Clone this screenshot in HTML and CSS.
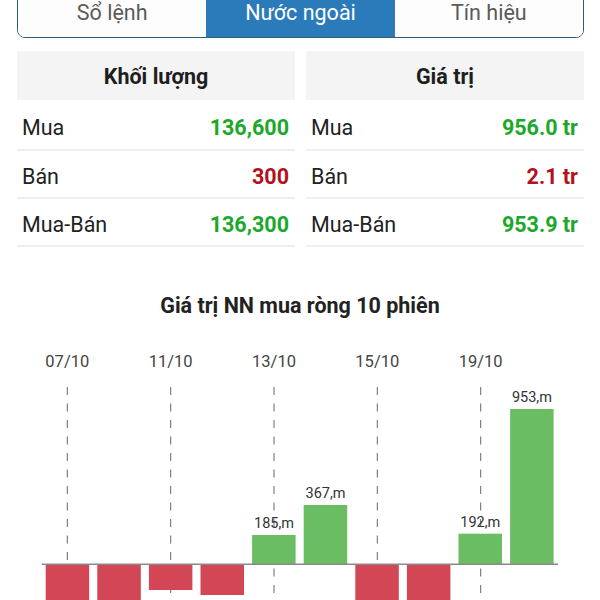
FILE: index.html
```html
<!DOCTYPE html>
<html lang="vi">
<head>
    <meta charset="UTF-8">
    <title>Nước ngoài</title>
    <link rel="stylesheet" href="styles.css">
</head>
<body>
    <div class="container">
        <div class="tabs">
            <div class="tab">Sổ lệnh</div>
            <div class="tab active">Nước ngoài</div>
            <div class="tab">Tín hiệu</div>
        </div>

        <div class="tables">
            <div class="stat-table">
                <div class="stat-head">Khối lượng</div>
                <div class="stat-row"><span>Mua</span><span class="up">136,600</span></div>
                <div class="stat-row"><span>Bán</span><span class="down">300</span></div>
                <div class="stat-row"><span>Mua-Bán</span><span class="up">136,300</span></div>
            </div>
            <div class="stat-table">
                <div class="stat-head">Giá trị</div>
                <div class="stat-row"><span>Mua</span><span class="up">956.0 tr</span></div>
                <div class="stat-row"><span>Bán</span><span class="down">2.1 tr</span></div>
                <div class="stat-row"><span>Mua-Bán</span><span class="up">953.9 tr</span></div>
            </div>
        </div>
    </div>

    <div class="chart">
        <h2 class="chart-title">Giá trị NN mua ròng 10 phiên</h2>
        <!-- net foreign buying, last 10 sessions -->
        <svg class="chart-svg" width="600" height="270" viewBox="0 0 600 270">
            <g class="dates">
                <text x="67.3" y="27">07/10</text>
                <text x="170.7" y="27">11/10</text>
                <text x="274" y="27">13/10</text>
                <text x="377.3" y="27">15/10</text>
                <text x="480.7" y="27">19/10</text>
            </g>
            <g class="grid">
                <line x1="67.3" y1="47" x2="67.3" y2="270"/>
                <line x1="170.7" y1="47" x2="170.7" y2="270"/>
                <line x1="274" y1="47" x2="274" y2="270"/>
                <line x1="377.3" y1="47" x2="377.3" y2="270"/>
                <line x1="480.7" y1="47" x2="480.7" y2="270"/>
            </g>
            <g class="bars">
                <rect class="neg" x="45.7" y="224.5" width="43.5" height="50"/>
                <rect class="neg" x="97.3" y="224.5" width="43.5" height="50"/>
                <rect class="neg" x="148.9" y="224.5" width="43.5" height="25.5"/>
                <rect class="neg" x="200.5" y="224.5" width="43.5" height="30.5"/>
                <rect class="pos" x="252.1" y="195" width="43.5" height="29.5"/>
                <rect class="pos" x="303.7" y="165" width="43.5" height="59.5"/>
                <rect class="neg" x="355.3" y="224.5" width="43.5" height="50"/>
                <rect class="neg" x="406.9" y="224.5" width="43.5" height="50"/>
                <rect class="pos" x="458.5" y="193.7" width="43.5" height="30.8"/>
                <rect class="pos" x="510.1" y="69" width="43.5" height="155.5"/>
            </g>
            <line class="axis" x1="41.7" y1="224.3" x2="558" y2="224.3"/>
            <g class="labels">
                <text x="274" y="188">185,m</text>
                <text x="325.5" y="158">367,m</text>
                <text x="480.3" y="187">192,m</text>
                <text x="531.9" y="62">953,m</text>
            </g>
        </svg>
    </div>
</body>
</html>
```

FILE: styles.css
```css
body {
    font-family: Roboto, "Noto Sans", Arial, sans-serif;
    background-color: #ffffff;
    color: #222;
    margin: 0;
    padding: 0;
    overflow: hidden;
}

.container {
    padding: 0 16px 0 17px;
}

.tabs {
    display: flex;
    height: 50px;
    margin-top: -12px;
    border: 1.5px solid #2f5d73;
    border-radius: 0 0 8px 8px;
    overflow: hidden;
    box-sizing: border-box;
}

.tab {
    flex: 1;
    display: flex;
    align-items: center;
    justify-content: center;
    padding-bottom: 2px;
    font-size: 21.5px;
    color: #5a5a5a;
    background-color: #fdfdfd;
}

.tab.active {
    background-color: #2b7bba;
    color: #ffffff;
}

.tables {
    display: grid;
    grid-template-columns: 1fr 1fr;
    gap: 11px;
    margin-top: 13px;
}

.stat-head {
    height: 49px;
    display: flex;
    align-items: center;
    justify-content: center;
    padding-top: 2px;
    box-sizing: border-box;
    background-color: #f4f4f4;
    font-size: 21.5px;
    font-weight: bold;
    color: #1e1e1e;
}

.stat-row {
    display: flex;
    justify-content: space-between;
    align-items: center;
    height: 48px;
    padding: 5px 6px 0 5px;
    box-sizing: border-box;
    border-bottom: 2px solid #efefef;
    font-size: 21.5px;
    color: #222;
}

.stat-row:nth-child(2) {
    height: 51px;
}

.stat-row .up {
    color: #1ba82b;
    font-weight: bold;
}

.stat-row .down {
    color: #b1121c;
    font-weight: bold;
}

.chart-title {
    margin: 46px 0 0;
    text-align: center;
    font-size: 21.5px;
    font-weight: bold;
    color: #222;
    line-height: 26px;
}

.chart-svg {
    display: block;
    margin-top: 21px;
}

.dates text {
    font-family: Roboto, Arial, sans-serif;
    font-size: 16.5px;
    fill: #444;
    text-anchor: middle;
}

.grid line {
    stroke: #666;
    stroke-width: 1;
    stroke-dasharray: 8 8.5;
}

.bars .pos {
    fill: #6abd62;
}

.bars .neg {
    fill: #d34656;
}

.axis {
    stroke: #8a8a8a;
    stroke-width: 1.5;
}

.labels text {
    font-family: Roboto, Arial, sans-serif;
    font-size: 14.5px;
    fill: #333;
    text-anchor: middle;
}
```
